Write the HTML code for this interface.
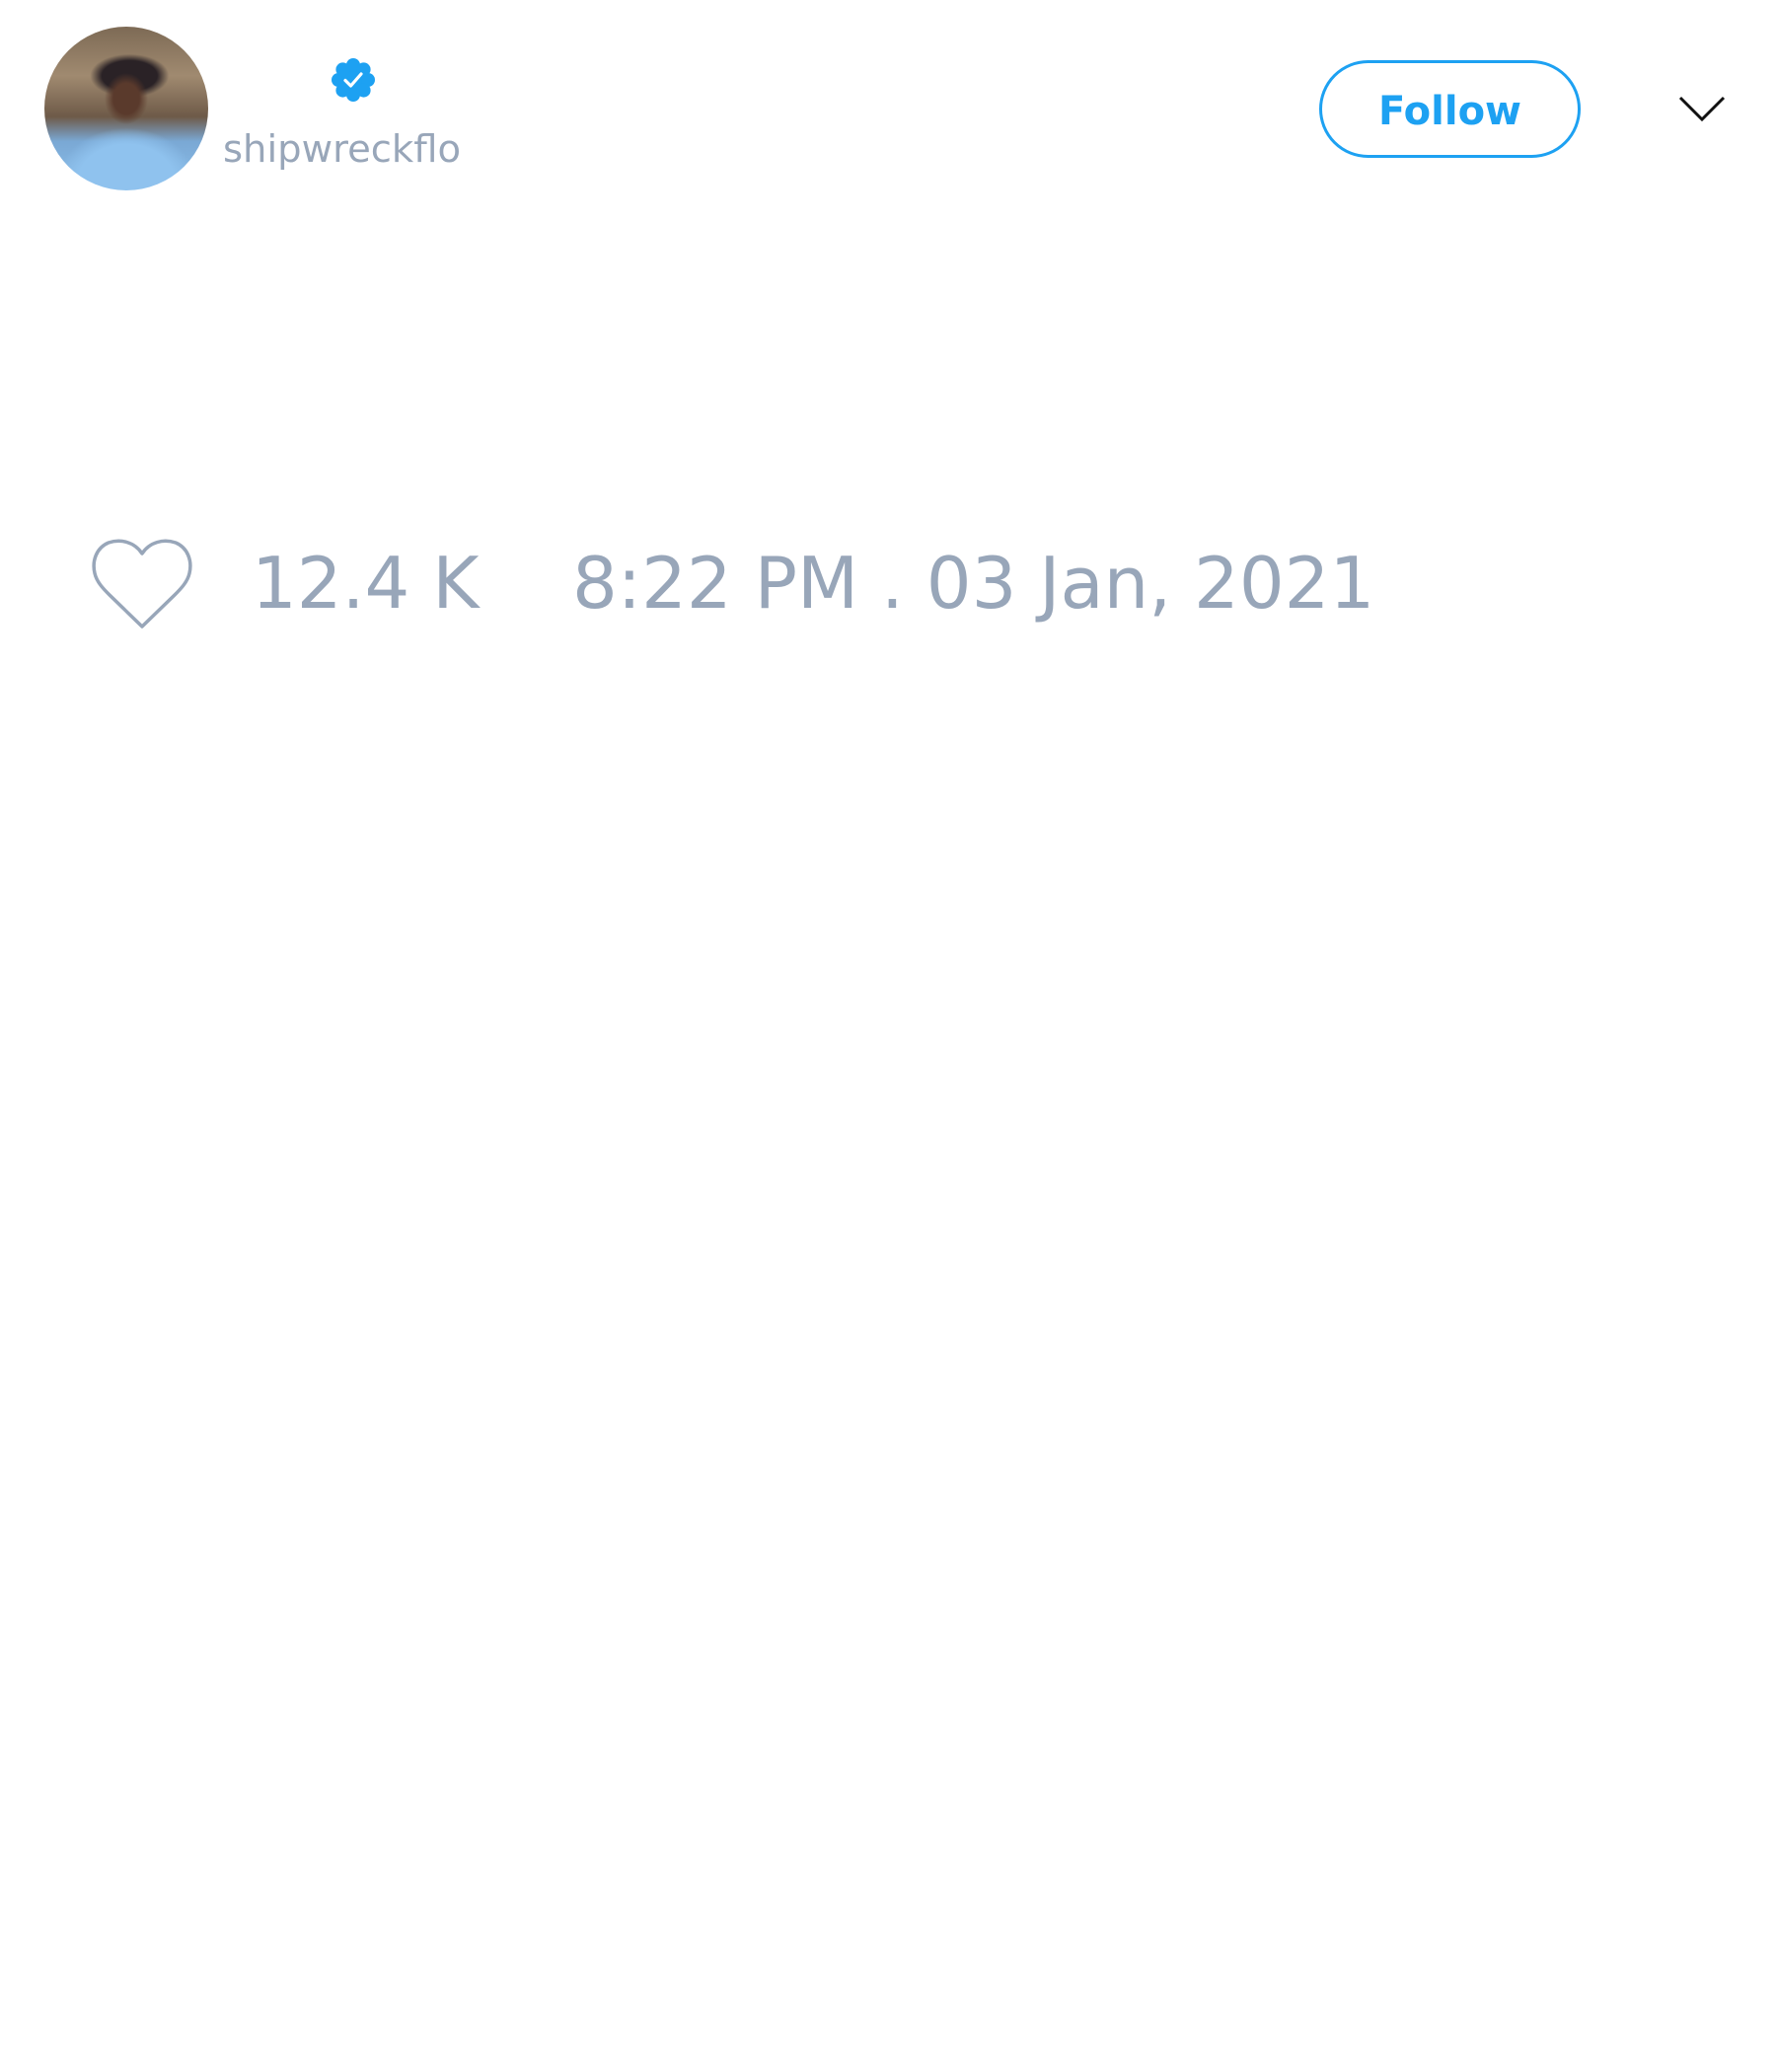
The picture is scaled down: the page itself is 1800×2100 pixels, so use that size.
<!DOCTYPE html>
<html><head><meta charset="utf-8"><style>
html,body{margin:0;padding:0;background:#fff;width:1800px;height:2100px;overflow:hidden;font-family:"DejaVu Sans","Liberation Sans",sans-serif;}
.a{position:absolute;}
#av{left:45px;top:27px;width:166px;height:166px;border-radius:50%;overflow:hidden;
background:
radial-gradient(ellipse 22px 26px at 50% 44%, #5a3a2c 0 60%, transparent 100%),
radial-gradient(ellipse 40px 22px at 52% 30%, #2a2226 0 70%, transparent 100%),
radial-gradient(ellipse 70px 55px at 50% 95%, #8fc2ee 0 70%, transparent 100%),
linear-gradient(180deg,#7d6a55 0%,#a08a70 30%,#6e5a48 55%,#7aa8d4 70%,#8cc0ec 100%);}
.t{color:#98a6b9;white-space:nowrap;}
</style></head><body>
<div id="av" class="a"></div>
<svg class="a" style="left:334px;top:57px" width="48" height="48" viewBox="0 0 48 48">
<g fill="#1da1f2"><circle cx="24" cy="24" r="17"/>
<circle cx="24" cy="9" r="7"/><circle cx="24" cy="39" r="7"/><circle cx="9" cy="24" r="7"/><circle cx="39" cy="24" r="7"/>
<circle cx="13.4" cy="13.4" r="7"/><circle cx="34.6" cy="13.4" r="7"/><circle cx="13.4" cy="34.6" r="7"/><circle cx="34.6" cy="34.6" r="7"/></g>
<path d="M16 24.5l5.5 5.5L32 18" fill="none" stroke="#fff" stroke-width="3.2" stroke-linecap="round" stroke-linejoin="round"/>
</svg>
<div class="a t" style="left:226px;top:128px;font-size:38.5px;line-height:48px;">shipwreckflo</div>
<div class="a" style="left:1337px;top:61px;width:259px;height:93px;border:3px solid #1da1f2;border-radius:50px;"></div>
<div class="a" style="left:1337px;top:64px;width:265px;height:99px;line-height:99px;text-align:center;font-weight:bold;font-size:40px;color:#1da1f2;">Follow</div>
<svg class="a" style="left:1700px;top:96px" width="50" height="30" viewBox="0 0 50 30">
<path d="M3 3L25 25L47 3" fill="none" stroke="#111" stroke-width="3"/></svg>
<svg class="a" style="left:90px;top:544px" width="108" height="96" viewBox="0 0 108 96">
<path d="M54 17C46 5 32 2 20 6C8 11 3 24 6 37C8 46 15 53 21 59L54 91L87 59C93 53 100 46 102 37C105 24 100 11 88 6C76 2 62 5 54 17Z" fill="none" stroke="#98a6b9" stroke-width="3.5" stroke-linejoin="round"/></svg>
<div class="a t" style="left:255px;top:546px;font-size:72px;line-height:90px;">12.4 K</div>
<div class="a t" style="left:580px;top:546px;font-size:72px;line-height:90px;">8:22 PM . 03 Jan, 2021</div>
</body></html>
